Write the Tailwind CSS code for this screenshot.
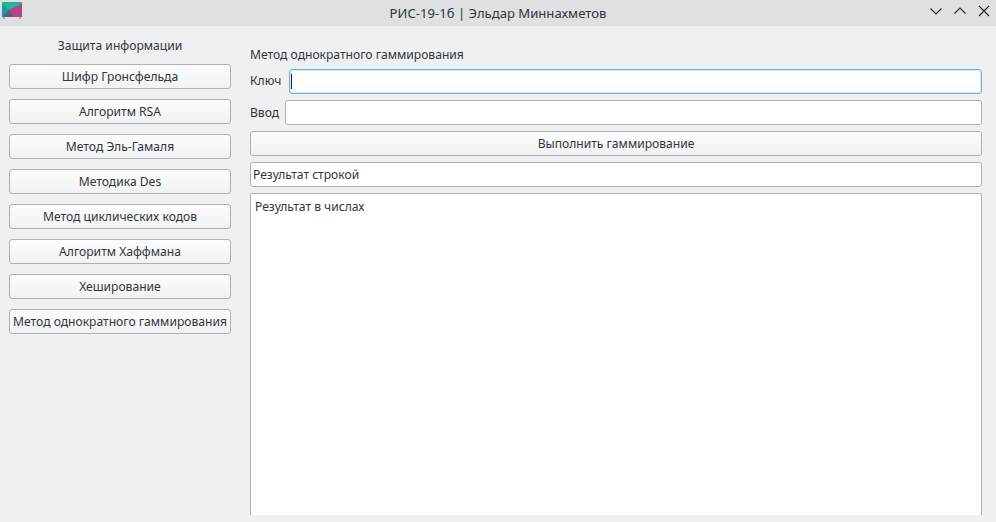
<!DOCTYPE html>
<html lang="ru">
<head>
  <meta charset="UTF-8" />
  <title>РИС-19-1б | Эльдар Миннахметов</title>
  <script src="https://cdn.jsdelivr.net/npm/@tailwindcss/browser@4"></script>
</head>
<body class="h-[522px] w-[996px] overflow-hidden bg-[#eff0f1] font-['Noto_Sans',sans-serif] text-[12.1px] text-[#31363b]">

  <!-- Title bar -->
  <header class="relative flex h-[26px] items-center justify-center bg-[#dee0e2]">
    <svg class="absolute left-[2px] top-[2px] h-[17px] w-[20px]" viewBox="0 0 20 17">
      <defs>
        <linearGradient id="logo-left" x1="0" y1="0" x2="0" y2="1">
          <stop offset="0" stop-color="#1fa6a8" />
          <stop offset="1" stop-color="#2a86b8" />
        </linearGradient>
        <linearGradient id="logo-right" x1="0" y1="0" x2="1" y2="1">
          <stop offset="0" stop-color="#d03a6c" />
          <stop offset="1" stop-color="#a8479a" />
        </linearGradient>
      </defs>
      <rect width="20" height="15" fill="url(#logo-left)" />
      <polygon points="0,0 20,0 20,2 7,8 0,2" fill="#20b49a" />
      <polygon points="20,2 20,15 12,15 7,8" fill="url(#logo-right)" />
      <polygon points="1,15 12,15 7,8" fill="#4f6870" />
      <rect x="1" y="15" width="2" height="2" fill="#a4a8ab" />
      <rect x="17" y="15" width="2" height="2" fill="#a4a8ab" />
    </svg>
    <span class="text-[13.1px] leading-[22px]">РИС-19-1б | Эльдар Миннахметов</span>
    <div class="absolute right-[6px] top-[5px] flex gap-[12px] text-[#232629]">
      <svg class="h-3 w-3" viewBox="0 0 12 12" fill="none" stroke="currentColor" stroke-width="1.1"><path d="M0.5 3.5 6 9 11.5 3.5" /></svg>
      <svg class="h-3 w-3" viewBox="0 0 12 12" fill="none" stroke="currentColor" stroke-width="1.1"><path d="M0.5 8.5 6 3 11.5 8.5" /></svg>
      <svg class="h-3 w-3" viewBox="0 0 12 12" fill="none" stroke="currentColor" stroke-width="1.1"><path d="M1 1 11 11 M11 1 1 11" /></svg>
    </div>
  </header>

  <div class="flex h-[489px] overflow-hidden">
    <!-- Left menu -->
    <aside class="w-[250px] shrink-0 pl-[9px] pt-[10px]">
      <p class="mb-[9px] w-[222px] text-center leading-[19px]">Защита информации</p>
      <div class="flex w-[222px] flex-col gap-[10px]">
        <button class="h-[25px] rounded-[3px] border border-[#aeb0b2] bg-gradient-to-b from-[#fcfcfc] to-[#f1f2f3] pt-px text-center">Шифр Гронсфельда</button>
        <button class="h-[25px] rounded-[3px] border border-[#aeb0b2] bg-gradient-to-b from-[#fcfcfc] to-[#f1f2f3] pt-px text-center">Алгоритм RSA</button>
        <button class="h-[25px] rounded-[3px] border border-[#aeb0b2] bg-gradient-to-b from-[#fcfcfc] to-[#f1f2f3] pt-px text-center">Метод Эль-Гамаля</button>
        <button class="h-[25px] rounded-[3px] border border-[#aeb0b2] bg-gradient-to-b from-[#fcfcfc] to-[#f1f2f3] pt-px text-center">Методика Des</button>
        <button class="h-[25px] rounded-[3px] border border-[#aeb0b2] bg-gradient-to-b from-[#fcfcfc] to-[#f1f2f3] pt-px text-center">Метод циклических кодов</button>
        <button class="h-[25px] rounded-[3px] border border-[#aeb0b2] bg-gradient-to-b from-[#fcfcfc] to-[#f1f2f3] pt-px text-center">Алгоритм Хаффмана</button>
        <button class="h-[25px] rounded-[3px] border border-[#aeb0b2] bg-gradient-to-b from-[#fcfcfc] to-[#f1f2f3] pt-px text-center">Хеширование</button>
        <button class="h-[25px] rounded-[3px] border border-[#aeb0b2] bg-gradient-to-b from-[#fcfcfc] to-[#f1f2f3] pt-px text-center">Метод однократного гаммирования</button>
      </div>
    </aside>

    <!-- Right panel -->
    <main class="flex w-[732px] flex-col pt-[19px]">
      <p class="mb-[5px] leading-[19px]">Метод однократного гаммирования</p>
      <div class="mb-[6px] flex h-[25px] items-center">
        <label class="w-[39px] shrink-0">Ключ</label>
        <div class="flex h-full flex-1 items-center rounded-[3px] border border-[#6ab4e0] bg-white pl-[1px] shadow-[inset_0_0_0_1px_#d5e9f5]">
          <span class="h-[15px] w-px bg-[#232629]"></span>
        </div>
      </div>
      <div class="mb-[6px] flex h-[25px] items-center">
        <label class="w-[35px] shrink-0 pt-px">Ввод</label>
        <div class="h-full flex-1 rounded-[3px] border border-[#aeb0b2] bg-white"></div>
      </div>
      <button class="mb-[6px] h-[25px] rounded-[3px] border border-[#aeb0b2] bg-gradient-to-b from-[#fcfcfc] to-[#f1f2f3] pt-px text-center">Выполнить гаммирование</button>
      <div class="mb-[6px] flex h-[25px] items-center rounded-[3px] border border-[#aeb0b2] bg-white pl-[2px] pt-px">Результат строкой</div>
      <div class="flex-1 rounded-t-[2px] border border-b-0 border-[#aeb0b2] bg-white pl-[4px] pt-[3px] leading-[19px]">Результат в числах</div>
    </main>
  </div>
</body>
</html>
